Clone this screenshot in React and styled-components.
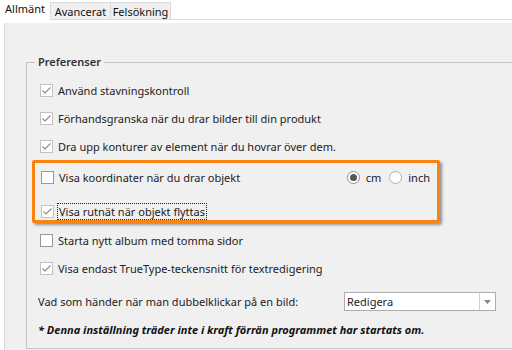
import React from 'react';
import styled, { createGlobalStyle } from 'styled-components';

const Global = createGlobalStyle`
  * { box-sizing: border-box; }
  body {
    margin: 0;
    width: 512px;
    height: 350px;
    overflow: hidden;
    background: #fff;
    font-family: "Noto Sans", "Open Sans", sans-serif;
    font-size: 11px;
    color: #222;
  }
`;

const Window = styled.div`
  width: 512px;
  height: 350px;
  overflow: hidden;
`;

const TabStrip = styled.div`
  display: flex;
  align-items: flex-end;
  height: 20px;
`;

const Tab = styled.div`
  height: ${p => (p.$active ? '20px' : '18px')};
  width: ${p => p.$w}px;
  flex: none;
  display: flex;
  align-items: center;
  justify-content: center;
  background: ${p => (p.$active ? '#fff' : '#f0f0f0')};
  border: ${p => (p.$active ? 'none' : '1px solid #d9d9d9')};
  border-left: ${p => (p.$first ? '1px solid #d9d9d9' : 'none')};
  line-height: 16px;
  white-space: nowrap;
  padding-top: ${p => (p.$active ? '0' : '1px')};
  padding-bottom: ${p => (p.$active ? '3px' : '0')};
  color: #111;
`;

const TabFill = styled.div`
  flex: 1;
  height: 20px;
  border-bottom: 1px solid #d9d9d9;
`;

const TabBody = styled.div`
  padding: 3px 0 0 4px;
`;

const Panel = styled.div`
  height: 327px;
  background: #f0f0f0;
  border-left: 1px solid #d8d8d8;
  padding: 31px 0 0 21px;
  overflow: hidden;
`;

const Group = styled.fieldset`
  margin: 0;
  width: 620px;
  border: 1px solid #c4c4c4;
  padding: 0 0 10px 0;
`;

const Legend = styled.legend`
  margin-left: 8px;
  padding: 0 3px;
  font-weight: 600;
  color: #333;
  line-height: 16px;
`;

const Rows = styled.div`
  padding: 6px 0 0 13px;
  width: 485px;
`;

const Row = styled.div`
  display: flex;
  align-items: center;
  gap: 5px;
  height: ${p => p.$h || 28}px;
`;

const Box = styled.span`
  width: 13px;
  height: 13px;
  flex: none;
  background: #fff;
  border: 1px solid ${p => (p.$checked ? '#c2c2c2' : '#999')};
  display: flex;
  align-items: center;
  justify-content: center;
`;

const Label = styled.span`
  line-height: 15px;
  white-space: nowrap;
  padding: 0 1px;
  margin-left: -1px;
  outline: ${p => (p.$focus ? '1px dotted #222' : 'none')};
`;

const Highlight = styled.div`
  margin: 0 0 0 -8px;
  width: 408px;
  height: 63px;
  border: 3px solid #fa820f;
  border-radius: 2px;
  box-shadow: 2px 2px 3px rgba(0, 0, 0, 0.4);
  padding: 6px 0 0 6px;
  display: flex;
  flex-direction: column;
  gap: 16px;
`;

const RadioGroup = styled.div`
  margin-left: auto;
  padding-right: 5px;
  display: flex;
  align-items: center;
  gap: 6px;
`;

const RadioItem = styled.label`
  display: flex;
  align-items: center;
  gap: 6px;
  margin-right: 2px;
`;

const Radio = styled.span`
  width: 13px;
  height: 13px;
  border-radius: 50%;
  background: #fff;
  border: 1px solid ${p => (p.$on ? '#8f8f8f' : '#b0b0b0')};
  display: flex;
  align-items: center;
  justify-content: center;
  &::after {
    content: '';
    width: 7px;
    height: 7px;
    border-radius: 50%;
    background: ${p => (p.$on ? '#555' : 'transparent')};
  }
`;

const After = styled.div`
  margin-top: 3px;
`;

const SelectRow = styled.div`
  display: grid;
  grid-template-columns: 306px 152px;
  align-items: center;
  margin: 10px 0 0 -2px;
  height: 19px;
  white-space: nowrap;
`;

const Select = styled.div`
  height: 19px;
  background: #fff;
  border: 1px solid #adadad;
  display: flex;
  align-items: center;
`;

const SelectText = styled.span`
  flex: 1;
  padding-left: 2px;
  line-height: 15px;
`;

const SelectArrow = styled.span`
  width: 16px;
  height: 100%;
  border-left: 1px solid #d0d0d0;
  display: flex;
  align-items: center;
  justify-content: center;
`;

const Note = styled.div`
  margin: 11px 0 0 -2px;
  font-weight: 700;
  font-style: italic;
  color: #111;
  line-height: 16px;
  white-space: nowrap;
`;

const Check = () => (
  <svg width="11" height="11" viewBox="0 0 11 11">
    <polyline points="1.5,5.5 4,8 9.5,2.5" fill="none" stroke="#8a8a8a" strokeWidth="1.1" />
  </svg>
);

const CheckRow = ({ checked, focus, h, children }) => (
  <Row $h={h}>
    <Box $checked={checked}>{checked && <Check />}</Box>
    <Label $focus={focus}>{children}</Label>
  </Row>
);

export default function App() {
  return (
    <Window>
      <Global />
      <TabStrip>
        <Tab $active $w={50}>Allmänt</Tab>
        <Tab $first $w={61}>Avancerat</Tab>
        <Tab $w={60}>Felsökning</Tab>
        <TabFill />
      </TabStrip>
      <TabBody>
        <Panel>
          <Group>
            <Legend>Preferenser</Legend>
            <Rows>
              <CheckRow checked>Använd stavningskontroll</CheckRow>
              <CheckRow checked>Förhandsgranska när du drar bilder till din produkt</CheckRow>
              <CheckRow checked>Dra upp konturer av element när du hovrar över dem.</CheckRow>
              <Highlight>
                <Row $h={17}>
                  <Box />
                  <Label>Visa koordinater när du drar objekt</Label>
                  <RadioGroup>
                    <RadioItem><Radio $on />cm</RadioItem>
                    <RadioItem><Radio />inch</RadioItem>
                  </RadioGroup>
                </Row>
                <CheckRow checked focus h={18}>Visa rutnät när objekt flyttas</CheckRow>
              </Highlight>
              <After>
                <CheckRow>Starta nytt album med tomma sidor</CheckRow>
                <CheckRow checked>Visa endast TrueType-teckensnitt för textredigering</CheckRow>
              </After>
              <SelectRow>
                <span>Vad som händer när man dubbelklickar på en bild:</span>
                <Select>
                  <SelectText>Redigera</SelectText>
                  <SelectArrow>
                    <svg width="7" height="4" viewBox="0 0 7 4"><polygon points="0,0 7,0 3.5,4" fill="#888" /></svg>
                  </SelectArrow>
                </Select>
              </SelectRow>
              <Note>* Denna inställning träder inte i kraft förrän programmet har startats om.</Note>
            </Rows>
          </Group>
        </Panel>
      </TabBody>
    </Window>
  );
}
